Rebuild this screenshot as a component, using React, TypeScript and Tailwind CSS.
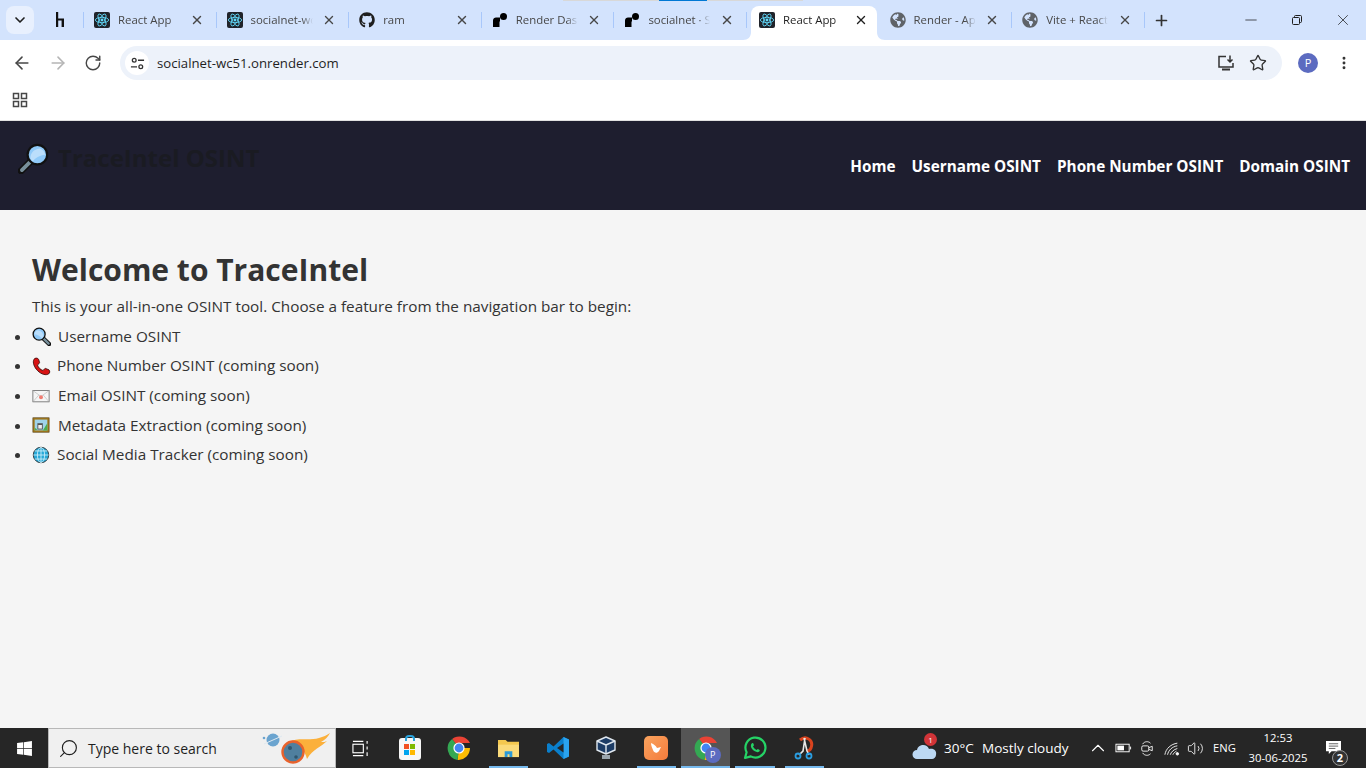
import { ChevronDown, ChevronUp, ArrowLeft, ArrowRight, RotateCw, X, Plus, Minus, Star, EllipsisVertical, Search, Volume2 } from "lucide-react";
import { FaGithub, FaGlobeAmericas, FaWindows } from "react-icons/fa";

const UI = "font-['Open_Sans',sans-serif]";

const ReactIcon = () => (
  <div className="w-4 h-4 rounded-[2px] bg-[#20232a] flex items-center justify-center shrink-0">
    <svg viewBox="-12 -12 24 24" className="w-4 h-4" fill="none" stroke="#61dafb" strokeWidth="1.3">
      <circle r="2.2" fill="#61dafb" stroke="none" />
      <ellipse rx="10" ry="4" />
      <ellipse rx="10" ry="4" transform="rotate(60)" />
      <ellipse rx="10" ry="4" transform="rotate(120)" />
    </svg>
  </div>
);

const RenderIcon = () => (
  <svg viewBox="0 0 16 16" className="w-4 h-4 shrink-0" fill="#000">
    <path d="M1 15V8.5C1 6.5 2.5 5.5 4 5.5H8V9.5H7.5V15Z" />
    <circle cx="11.5" cy="4.5" r="3.5" />
  </svg>
);

const HashIcon = () => (
  <svg viewBox="0 0 16 16" className="w-4 h-4 shrink-0" fill="#111">
    <rect x="4" y="0" width="2.2" height="15" />
    <path d="M6 6.5H12V15H9.6V8.4H6Z" />
  </svg>
);

const Globe = () => <FaGlobeAmericas className="w-4 h-4 shrink-0 text-[#5f6368]" />;

type TabProps = { icon: React.ReactNode; title: string; active?: boolean; last?: boolean };

const Tab = ({ icon, title, active, last }: TabProps) => (
  <div className={`relative h-[34px] flex items-center shrink-0 ${active ? "w-[126px] ml-[4px] mr-[2.6px] pl-[8px] pb-[6px] bg-white rounded-t-lg" : "w-[132.6px] pl-[10px] pb-[6px]"}`}>
    {!active && !last && <div className="absolute right-0 top-[6px] h-[16px] w-px bg-[#a8c7fa]" />}
    {active && (
      <>
        <svg viewBox="0 0 8 8" className="absolute bottom-0 -left-2 w-2 h-2" fill="#fff"><path d="M8 0V8H0C5 8 8 5 8 0Z" /></svg>
        <svg viewBox="0 0 8 8" className="absolute bottom-0 -right-2 w-2 h-2" fill="#fff"><path d="M0 0V8H8C3 8 0 5 0 0Z" /></svg>
      </>
    )}
    {icon}
    <span className={`ml-2 w-[62px] overflow-hidden whitespace-nowrap text-[11.4px] [mask-image:linear-gradient(to_right,black_82%,transparent)] ${active ? "text-[#1f1f1f]" : "text-[#474747]"}`}>{title}</span>
    <X className={`absolute top-[7px] w-[14px] h-[14px] ${active ? "right-[9px] text-[#1f1f1f]" : "right-[13px] text-[#474747]"}`} strokeWidth={2.4} />
  </div>
);

const TabStrip = () => (
  <div className="relative h-10 bg-[#d3e3fd] flex items-end">
    <div className="absolute top-0 left-[563px] w-[240px] h-px bg-[#d8d8d8]"><div className="ml-[96px] w-[48px] h-px bg-[#0078d4]" /></div>
    <div className="w-[40px] h-10 flex items-center justify-center shrink-0">
      <div className="w-7 h-7 rounded-lg bg-[#e8f0fe] flex items-center justify-center"><ChevronDown className="w-4 h-4 text-[#1f1f1f]" strokeWidth={2.5} /></div>
    </div>
    <div className="relative w-[44px] h-[34px] shrink-0 flex items-center pl-3 pb-[6px]">
      <HashIcon />
      <div className="absolute right-0 top-[6px] h-[16px] w-px bg-[#a8c7fa]" />
    </div>
    <Tab icon={<ReactIcon />} title="React App" />
    <Tab icon={<ReactIcon />} title="socialnet-wc51" />
    <Tab icon={<FaGithub className="w-4 h-4 shrink-0 text-[#1f1f1f]" />} title="ram" />
    <Tab icon={<RenderIcon />} title="Render Dashboard" />
    <Tab icon={<RenderIcon />} title="socialnet · Static" />
    <Tab icon={<ReactIcon />} title="React App" active />
    <Tab icon={<Globe />} title="Render - App" />
    <Tab icon={<Globe />} title="Vite + React" />
    <div className="w-[34px] h-[34px] flex items-center justify-center shrink-0 pb-[6px]"><Plus className="w-[17px] h-[17px] text-[#333]" strokeWidth={2.4} /></div>
    <div className="flex-1" />
    <div className="flex h-10 self-start items-center text-[#1f1f1f]">
      <div className="w-[46px] flex justify-center"><Minus className="w-[18px] h-[18px]" strokeWidth={1} /></div>
      <div className="w-[46px] flex justify-center">
        <svg viewBox="0 0 12 12" className="w-3 h-3" fill="none" stroke="currentColor"><rect x="1.5" y="3.5" width="7" height="7" rx="1" /><path d="M3.5 3.5V2.5A1 1 0 0 1 4.5 1.5H9.5A1 1 0 0 1 10.5 2.5V7.5A1 1 0 0 1 9.5 8.5H8.5" /></svg>
      </div>
      <div className="w-[46px] flex justify-center"><X className="w-[18px] h-[18px]" strokeWidth={1} /></div>
    </div>
  </div>
);

const Toolbar = () => (
  <div className="h-10 bg-white rounded-t-lg flex items-center text-[#474747]">
    <div className="w-[120px] flex items-center shrink-0 pl-[12px] gap-4 mt-[6px]">
      <ArrowLeft className="w-5 h-5" strokeWidth={1.9} />
      <ArrowRight className="w-5 h-5 text-[#b5b5b5]" strokeWidth={1.9} />
      <RotateCw className="w-[18px] h-[18px]" strokeWidth={1.9} />
    </div>
    <div className="w-[1162px] h-[34px] mt-[6px] bg-[#edf2fa] rounded-full flex items-center pl-[5px] pr-[15px]">
      <div className="w-6 h-6 bg-white rounded-full flex items-center justify-center">
        <svg viewBox="0 0 16 16" className="w-[15px] h-[15px]" fill="none" stroke="#333" strokeWidth="1.4"><circle cx="4.5" cy="4.5" r="2" /><path d="M8.5 4.5H15M1 11.5H7.5" /><circle cx="11.5" cy="11.5" r="2" /></svg>
      </div>
      <span className="ml-2 pt-[1px] text-[13.2px] text-[#1f1f1f]">socialnet-wc51.onrender.com</span>
      <div className="flex-1" />
      <svg viewBox="0 0 18 18" className="w-[18px] h-[18px] mr-[14px]" fill="none" stroke="#333" strokeWidth="1.5"><path d="M9 2.5H2V13H16V9" /><path d="M5 15.5H13" strokeWidth="2" /><path d="M13 1.5V8M10.5 5.5L13 8L15.5 5.5" /></svg>
      <Star className="w-[18px] h-[18px] text-[#333]" strokeWidth={1.8} />
    </div>
    <div className="flex-1 flex items-center mt-[6px] pl-[16px]">
      <div className="w-5 h-5 rounded-full bg-[#5c6bc0] flex items-center justify-center text-white text-[11px]">P</div>
      <EllipsisVertical className="ml-[18px] w-4 h-4 text-[#333]" strokeWidth={2.4} />
    </div>
  </div>
);

const BookmarkBar = () => (
  <div className="h-[41px] bg-white border-b border-[#e1e1e1] flex items-center pl-[12px]">
    <svg viewBox="0 0 16 16" className="w-4 h-4" fill="none" stroke="#474747" strokeWidth="1.5">
      <rect x="1.5" y="1.5" width="5" height="5" /><rect x="9.5" y="1.5" width="5" height="5" />
      <rect x="1.5" y="9.5" width="5" height="5" /><rect x="9.5" y="9.5" width="5" height="5" />
    </svg>
  </div>
);

const Magnifier = ({ className }: { className: string }) => (
  <svg viewBox="0 0 20 20" className={className}>
    <path d="M8 12L2 18" stroke="#111" strokeWidth="4.5" strokeLinecap="round" />
    <path d="M8 12L2.5 17.5" stroke="#78909c" strokeWidth="2.4" strokeLinecap="round" />
    <circle cx="12.5" cy="7.5" r="6.3" fill="#90caf9" stroke="#111" strokeWidth="1.4" />
    <path d="M8 10C8 6.5 10 4 14 3.5C16 4 17.5 6 17.5 7.5C14 8 11 9.5 9.5 12Z" fill="#bbdefb" />
  </svg>
);

const PhoneEmoji = () => (
  <svg viewBox="0 0 20 20" className="w-[19px] h-[19px]">
    <path d="M2 2.5C3.5 0.5 6 1 7 2.5L8 6C7.5 7.5 6 7.5 5.8 8.5C6.5 11 9 13.5 11.5 14.2C12.5 14 12.5 12.5 14 12L17.8 13.5C19 15 19 16.5 17.5 17.8C15 19.5 10 18.5 6 14.5C2 10.5 0.5 5.5 2 2.5Z" fill="#d81313" stroke="#3a0a0a" strokeWidth="0.9" />
  </svg>
);

const MailEmoji = () => (
  <svg viewBox="0 0 20 20" className="w-[18px] h-[18px]">
    <rect x="1" y="4" width="18" height="12.5" fill="#f5f5f5" stroke="#555" strokeWidth="0.8" />
    <path d="M1 4L10 10.5L19 4M1 16.5L7.5 9M19 16.5L12.5 9" fill="none" stroke="#b5b5b5" strokeWidth="0.7" />
    <circle cx="10" cy="11.5" r="2.2" fill="#ef7d72" />
  </svg>
);

const PictureEmoji = () => (
  <svg viewBox="0 0 20 20" className="w-[18px] h-[18px]">
    <rect x="1" y="2" width="18" height="16" fill="#a47a1e" stroke="#4e3b10" strokeWidth="0.7" />
    <rect x="3" y="4" width="14" height="12" fill="#9fd3ea" />
    <path d="M12 16L17 8V16Z" fill="#4caf50" />
    <path d="M3 16V13L6 15Z" fill="#4caf50" />
    <rect x="6" y="8" width="6" height="7" fill="#555" />
    <rect x="7" y="10" width="4" height="4" fill="#eee" />
  </svg>
);

const GlobeEmoji = () => (
  <svg viewBox="0 0 20 20" className="w-[18px] h-[18px]" fill="none">
    <circle cx="10" cy="10" r="8.6" fill="#29a9d8" stroke="#222" strokeWidth="0.9" />
    <g stroke="#d5f1fb" strokeWidth="0.9">
      <ellipse cx="10" cy="10" rx="4" ry="8.4" />
      <path d="M10 1.5V18.5M1.5 10H18.5M3 5.5H17M3 14.5H17" />
    </g>
  </svg>
);

const items = [
  { emoji: <Magnifier className="w-[19px] h-[19px] -scale-x-100" />, text: "Username OSINT", gap: "ml-[7px]" },
  { emoji: <PhoneEmoji />, text: "Phone Number OSINT (coming soon)", gap: "ml-[6px]" },
  { emoji: <MailEmoji />, text: "Email OSINT (coming soon)", gap: "ml-[8px]" },
  { emoji: <PictureEmoji />, text: "Metadata Extraction (coming soon)", gap: "ml-[8px]" },
  { emoji: <GlobeEmoji />, text: "Social Media Tracker (coming soon)", gap: "ml-[7px]" },
];

const Page = () => (
  <div className="h-[607px] bg-[#f5f5f5] text-[#333]">
    <header className="h-[89px] bg-[#1e1e2f] flex items-center justify-between pl-[18px] pr-4">
      <div className="flex items-center gap-[9px] mb-[15px]">
        <Magnifier className="w-[31px] h-[31px]" />
        <h1 className="text-[24px] font-bold text-[#1a1b22]">TraceIntel OSINT</h1>
      </div>
      <nav className="flex gap-4 mt-[1px] text-white text-[15.3px] font-bold">
        <a>Home</a>
        <a>Username OSINT</a>
        <a>Phone Number OSINT</a>
        <a>Domain OSINT</a>
      </nav>
    </header>
    <main className="pt-[38px]">
      <h2 className="pl-8 text-[30px] leading-[44px] font-bold">Welcome to TraceIntel</h2>
      <p className="pl-8 text-[15.3px] leading-[22px] mt-[3px]">This is your all-in-one OSINT tool. Choose a feature from the navigation bar to begin:</p>
      <ul className="mt-[4.8px] pl-8 list-disc text-[15.3px]">
        {items.map((item) => (
          <li key={item.text} className="h-[29.6px] leading-[29.6px]">
            <span className="inline-flex items-center h-[29.6px] align-top">
              {item.emoji}
              <span className={item.gap}>{item.text}</span>
            </span>
          </li>
        ))}
      </ul>
    </main>
  </div>
);

const ChromeLogo = ({ badge }: { badge?: boolean }) => (
  <div className="relative w-6 h-6">
    <svg viewBox="0 0 24 24" className="w-6 h-6">
      <path d="M12 12L5.1 2.9A12 12 0 0 1 23 7H12Z" fill="#ea4335" />
      <path d="M12 12H23A12 12 0 0 1 10.5 24L12 12Z" fill="#fbbc04" />
      <path d="M12 12L10.5 24A12 12 0 0 1 5.1 2.9L12 12Z" fill="#34a853" />
      <circle cx="12" cy="12" r="5.6" fill="#fff" />
      <circle cx="12" cy="12" r="4.4" fill="#4285f4" />
    </svg>
    {badge && <div className="absolute -right-[3px] -bottom-[3px] w-4 h-4 rounded-full bg-[#5c6bc0] flex items-center justify-center text-white text-[9px]">P</div>}
  </div>
);

const Slot = ({ children, open, active }: { children: React.ReactNode; open?: boolean; active?: boolean }) => (
  <div className={`relative h-10 w-[49.3px] shrink-0 flex items-center justify-center ${active ? "bg-[#555]" : ""}`}>
    {children}
    {open && <div className={`absolute bottom-0 h-[2px] bg-[#76b9ed] ${active ? "left-0 right-0" : "left-[5px] right-[5px]"}`} />}
  </div>
);

const Taskbar = () => (
  <div className="h-10 bg-[#262626] flex items-center text-white">
    <div className="w-[48px] h-10 flex items-center justify-center"><FaWindows className="w-[17px] h-[17px]" /></div>
    <div className="relative w-[288px] h-10 bg-[#f0f0f0] border border-[#b8b8b8] flex items-center pl-[9px] text-[#1f1f1f]">
      <Search className="w-[21px] h-[21px] -scale-x-100" strokeWidth={1.3} />
      <span className="ml-[9px] text-[14px]">Type here to search</span>
      <svg viewBox="0 0 70 34" className="absolute right-[4px] top-[2px] w-[70px] h-[34px]">
        <circle cx="12" cy="9" r="6.5" fill="#6ba4cf" />
        <path d="M3 13L21 5" stroke="#dfe9f0" strokeWidth="1" />
        <circle cx="3" cy="7" r="1.3" fill="#6ba4cf" />
        <path d="M28 11C36 6 48 10 58 7C62 6 66 4 69 2C67 6 64 9 60 11C63 11 64 11 66 10C60 16 52 18 46 28C44 20 38 12 28 11Z" fill="#fbb03b" />
        <circle cx="32" cy="21" r="10.5" fill="#4f7f9e" stroke="#e8622c" strokeWidth="2.4" />
        <circle cx="29" cy="17" r="2" fill="#2f566f" />
        <circle cx="35" cy="26" r="1.8" fill="#2f566f" />
      </svg>
    </div>
    <Slot>
      <svg viewBox="0 0 18 18" className="w-[17px] h-[17px]" fill="none" stroke="#fff" strokeWidth="1.2"><rect x="1" y="4.5" width="11" height="9" /><path d="M1 1.5H12M1 16.5H12M16 1V4M16 7V10" /><path d="M16 13V17" /></svg>
    </Slot>
    <Slot>
      <div className="relative w-[22px] h-[22px] bg-[#f7f7f7] rounded-[3px] mt-[2px] flex items-center justify-center">
        <div className="absolute -top-[3px] left-[6px] w-[10px] h-[6px] border-2 border-b-0 border-[#2aa3dc] rounded-t-sm" />
        <div className="grid grid-cols-2 gap-px w-[11px] h-[11px]">
          <div className="bg-[#f25022]" /><div className="bg-[#7fba00]" /><div className="bg-[#00a4ef]" /><div className="bg-[#ffb900]" />
        </div>
      </div>
    </Slot>
    <Slot><ChromeLogo /></Slot>
    <Slot open>
      <svg viewBox="0 0 24 22" className="w-[23px] h-[21px]">
        <path d="M1 2H9L11 4H23V20H1Z" fill="#f4c84f" />
        <path d="M1 7H23V20H1Z" fill="#fbdb7a" />
        <path d="M8 20V14H16V20H13V17H11V20Z" fill="#2b9ad8" />
      </svg>
    </Slot>
    <Slot>
      <svg viewBox="0 0 24 24" className="w-6 h-6">
        <path d="M17.5 1L23 3.5V20.5L17.5 23L7.5 13.5L3 17L1 16V8L3 7L7.5 10.5Z" fill="#0a7fcc" />
        <path d="M17.5 1L23 3.5V20.5L17.5 23Z" fill="#2aa3ef" />
        <path d="M17.5 7.5L11 12L17.5 16.5Z" fill="#262626" />
      </svg>
    </Slot>
    <Slot>
      <svg viewBox="0 0 24 24" className="w-6 h-6 -ml-[3px]" strokeLinejoin="round">
        <path d="M12 1L21 5V14L12 18L3 14V5Z" fill="#1c3c66" stroke="#dfe7ef" strokeWidth="1.4" />
        <path d="M3 5L12 9L21 5M12 9V18" fill="none" stroke="#dfe7ef" strokeWidth="1.4" />
        <path d="M8 19H16V23H8Z" fill="#9aa5ad" />
      </svg>
    </Slot>
    <Slot open>
      <div className="w-6 h-6 rounded-[5px] bg-[linear-gradient(135deg,#f9a35e,#f47b3c)] flex items-center justify-center">
        <svg viewBox="0 0 16 16" className="w-4 h-4" fill="#fff"><path d="M3 3C6 4 8 6 9 8L13 7L11 11C9 14 6 13 5 10C4 8 3 5 3 3Z" /></svg>
      </div>
    </Slot>
    <Slot open active><ChromeLogo badge /></Slot>
    <Slot open>
      <svg viewBox="0 0 24 24" className="w-6 h-6 -ml-[1px]" fill="none">
        <path d="M2 22L3.6 16.2A10 10 0 1 1 7.8 20.4Z" stroke="#25d366" strokeWidth="2.2" strokeLinejoin="round" />
        <path d="M8.7 7.5C9.5 6.7 10.2 7 10.5 7.8L11 9.2L10 10.5C10.7 12 12 13.2 13.5 14L14.8 13L16.3 13.7C17 14.2 16.9 14.9 16.2 15.6C14.5 17 11.3 15.5 9.5 13.6C7.8 11.7 7.2 9 8.7 7.5Z" fill="#25d366" />
      </svg>
    </Slot>
    <Slot open>
      <svg viewBox="0 0 24 24" className="w-6 h-6 -ml-[1px]" fill="none">
        <path d="M8 4C14 -1 22 4 19 12C18 14 16 15 15 15" stroke="#d9431e" strokeWidth="3" />
        <path d="M13 2L11 15L7 19M12 2L15 15L17 19" stroke="#e8e8e8" strokeWidth="1.6" />
        <circle cx="6" cy="20" r="2.5" stroke="#2a9de0" strokeWidth="1.8" />
        <circle cx="17" cy="20" r="2.5" stroke="#2a9de0" strokeWidth="1.8" />
      </svg>
    </Slot>
    <div className="flex-1" />
    <div className="relative w-[26px] h-[24px] mr-[6px]">
      <svg viewBox="0 0 26 20" className="absolute bottom-0 w-[26px] h-5"><path d="M5 19A4.5 4.5 0 0 1 5 10C6 4 15 3 17 9C22 8 25 11 24 15C24 17 22 19 20 19Z" fill="#bcd8f3" /></svg>
      <div className="absolute -top-[3px] right-[1px] w-[13px] h-[13px] rounded-full bg-[#d13438] text-white text-[8px] flex items-center justify-center">1</div>
    </div>
    <span className="text-[13.5px] w-[38px]">30°C</span>
    <span className="text-[13.5px] w-[105px] whitespace-nowrap">Mostly cloudy</span>
    <div className="flex items-center w-[126px]">
      <ChevronUp className="w-[22px] h-[22px] mr-[5.5px]" strokeWidth={1.2} />
      <svg viewBox="0 0 18 12" className="w-[17px] h-3 mr-[8.5px]" fill="none" stroke="#fff"><rect x="1" y="2" width="14" height="8" /><rect x="2.5" y="3.5" width="7" height="5" fill="#fff" stroke="none" /><path d="M16.5 4.5V7.5" /></svg>
      <svg viewBox="0 0 16 18" className="w-[14px] h-[17px] mr-[10px]" fill="none" stroke="#fff" strokeWidth="1"><path d="M3 4C5 0.5 10 0.5 12 3M3 14C5 17.5 10 17.5 12 15" /><rect x="2" y="6" width="8" height="6" rx="1.5" /><path d="M10 8L14 6.5V11.5L10 10" /></svg>
      <svg viewBox="0 0 18 16" className="w-[16px] h-[15px] mr-[6.5px]" fill="none" stroke="#fff" strokeWidth="1"><path d="M1 15C2 8 8 3 15 2M4 15C5 10 9 6 15 5M7 15C8 12 11 9 15 8M10 15C11 13 12 12 14 11" /><circle cx="15" cy="14" r="1.4" fill="#fff" /></svg>
      <Volume2 className="w-[17px] h-[17px]" strokeWidth={1.2} />
    </div>
    <span className="text-[11.2px] w-[33px]">ENG</span>
    <div className="w-[64px] text-[11.3px] leading-[20px] text-center">
      <div>12:53</div>
      <div className="whitespace-nowrap">30-06-2025</div>
    </div>
    <div className="relative w-[56px] h-10 flex items-center">
      <svg viewBox="0 0 18 16" className="ml-[15px] w-[17px] h-[15px] -mt-[2px]" fill="#fff"><path d="M1 1H17V12H7L4 15V12H1Z" /><path d="M4 4H14M4 6.5H14M4 9H11" stroke="#333" strokeWidth="0.8" /></svg>
      <div className="absolute left-[22px] top-[22px] w-4 h-4 rounded-full bg-[#333] border border-[#999] text-white text-[11px] font-bold flex items-center justify-center">2</div>
    </div>
  </div>
);

const App = () => (
  <div className={`w-[1366px] h-[768px] overflow-hidden flex flex-col ${UI}`}>
    <TabStrip />
    <Toolbar />
    <BookmarkBar />
    <Page />
    <Taskbar />
  </div>
);

export default App;
